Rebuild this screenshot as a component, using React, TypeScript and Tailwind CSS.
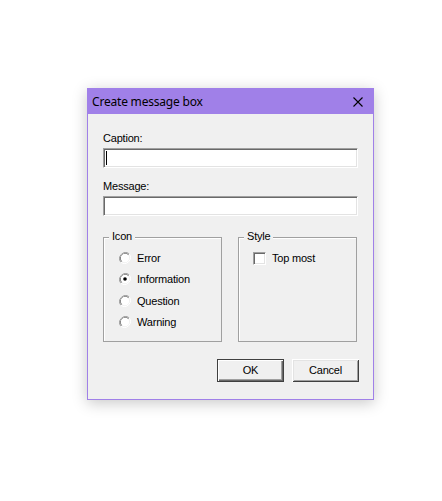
import React from 'react';

const sunken =
  'border border-t-[#a0a0a0] border-l-[#a0a0a0] border-b-white border-r-white shadow-[inset_1px_1px_0_#696969,inset_-1px_-1px_0_#e3e3e3]';

const Radio = ({ checked }: { checked?: boolean }) => (
  <svg width="12" height="12" viewBox="0 0 12 12" className="shrink-0">
    <path d="M10.2 1.8 A6 6 0 0 0 1.8 10.2" fill="none" stroke="#a0a0a0" strokeWidth="1" />
    <path d="M1.8 10.2 A6 6 0 0 0 10.2 1.8" fill="none" stroke="#ffffff" strokeWidth="1" />
    <path d="M9.5 2.5 A5 5 0 0 0 2.5 9.5" fill="none" stroke="#696969" strokeWidth="1" />
    <circle cx="6" cy="6" r="4.2" fill="#ffffff" />
    {checked && <circle cx="6" cy="6" r="1.8" fill="#000000" />}
  </svg>
);

const GroupBox = ({ label, children }: { label: string; children?: React.ReactNode }) => (
  <div className="relative w-[119px] h-[105px] border border-[#a0a0a0] shadow-[inset_1px_1px_0_#ffffff]">
    <span className="absolute -top-[8px] left-[5px] bg-[#f0f0f0] px-[3px] leading-[13px]">{label}</span>
    {children}
  </div>
);

const Button = ({ label, isDefault }: { label: string; isDefault?: boolean }) => (
  <button
    className={`w-[67px] h-[23px] bg-[#f0f0f0] flex items-center justify-center leading-none ${
      isDefault
        ? 'border border-[#404040] shadow-[inset_1px_1px_0_#ffffff,inset_-1px_-1px_0_#696969,inset_-2px_-2px_0_#a0a0a0]'
        : 'shadow-[inset_1px_1px_0_#ffffff,inset_-1px_-1px_0_#404040,inset_2px_2px_0_#e3e3e3,inset_-2px_-2px_0_#a0a0a0]'
    }`}
  >
    {label}
  </button>
);

export default function App() {
  return (
    <div className="min-h-[501px] bg-white pt-[88px] pl-[87px] font-['Liberation_Sans',Arial,sans-serif] text-[11px] tracking-[-0.2px] text-black">
      <div className="w-[287px] h-[312px] border border-[#a080e8] bg-[#f0f0f0] flex flex-col shadow-[0_3px_14px_rgba(0,0,0,0.22)]">
        {/* title bar */}
        <div className="h-[25px] bg-[#a080e8] flex items-center justify-between pl-[4px] pr-[10px]">
          <span className="text-[12px] font-['Noto_Sans','Liberation_Sans',sans-serif] text-black tracking-[-0.2px]">
            Create message box
          </span>
          <svg width="10" height="10" viewBox="0 0 10 10">
            <path d="M0.5 0.5 L9.5 9.5 M9.5 0.5 L0.5 9.5" stroke="#000" strokeWidth="1.1" />
          </svg>
        </div>

        <div className="flex flex-col px-[15px] pt-[18px]">
          <label className="leading-[13px]">Caption:</label>
          <div className={`mt-[3px] h-[20px] bg-white ${sunken} flex items-center pl-[2px]`}>
            <span className="w-[1px] h-[14px] bg-black" />
          </div>

          <label className="leading-[13px] mt-[12px]">Message:</label>
          <div className={`mt-[3px] h-[20px] bg-white ${sunken}`} />

          <div className="flex gap-[16px] mt-[21px]">
            <GroupBox label="Icon">
              <div className="flex flex-col pl-[15px] pt-[9px]">
                {['Error', 'Information', 'Question', 'Warning'].map((t) => (
                  <div key={t} className="h-[21.5px] flex items-center gap-[6px]">
                    <Radio checked={t === 'Information'} />
                    <span>{t}</span>
                  </div>
                ))}
              </div>
            </GroupBox>
            <GroupBox label="Style">
              <div className="flex items-center gap-[6px] pl-[14px] pt-[13px] h-[14px] box-content">
                <span className={`w-[13px] h-[13px] bg-white ${sunken}`} />
                <span>Top most</span>
              </div>
            </GroupBox>
          </div>

          <div className="flex justify-end gap-[8px] mt-[17px] -mr-px">
            <Button label="OK" isDefault />
            <Button label="Cancel" />
          </div>
        </div>
      </div>
    </div>
  );
}
